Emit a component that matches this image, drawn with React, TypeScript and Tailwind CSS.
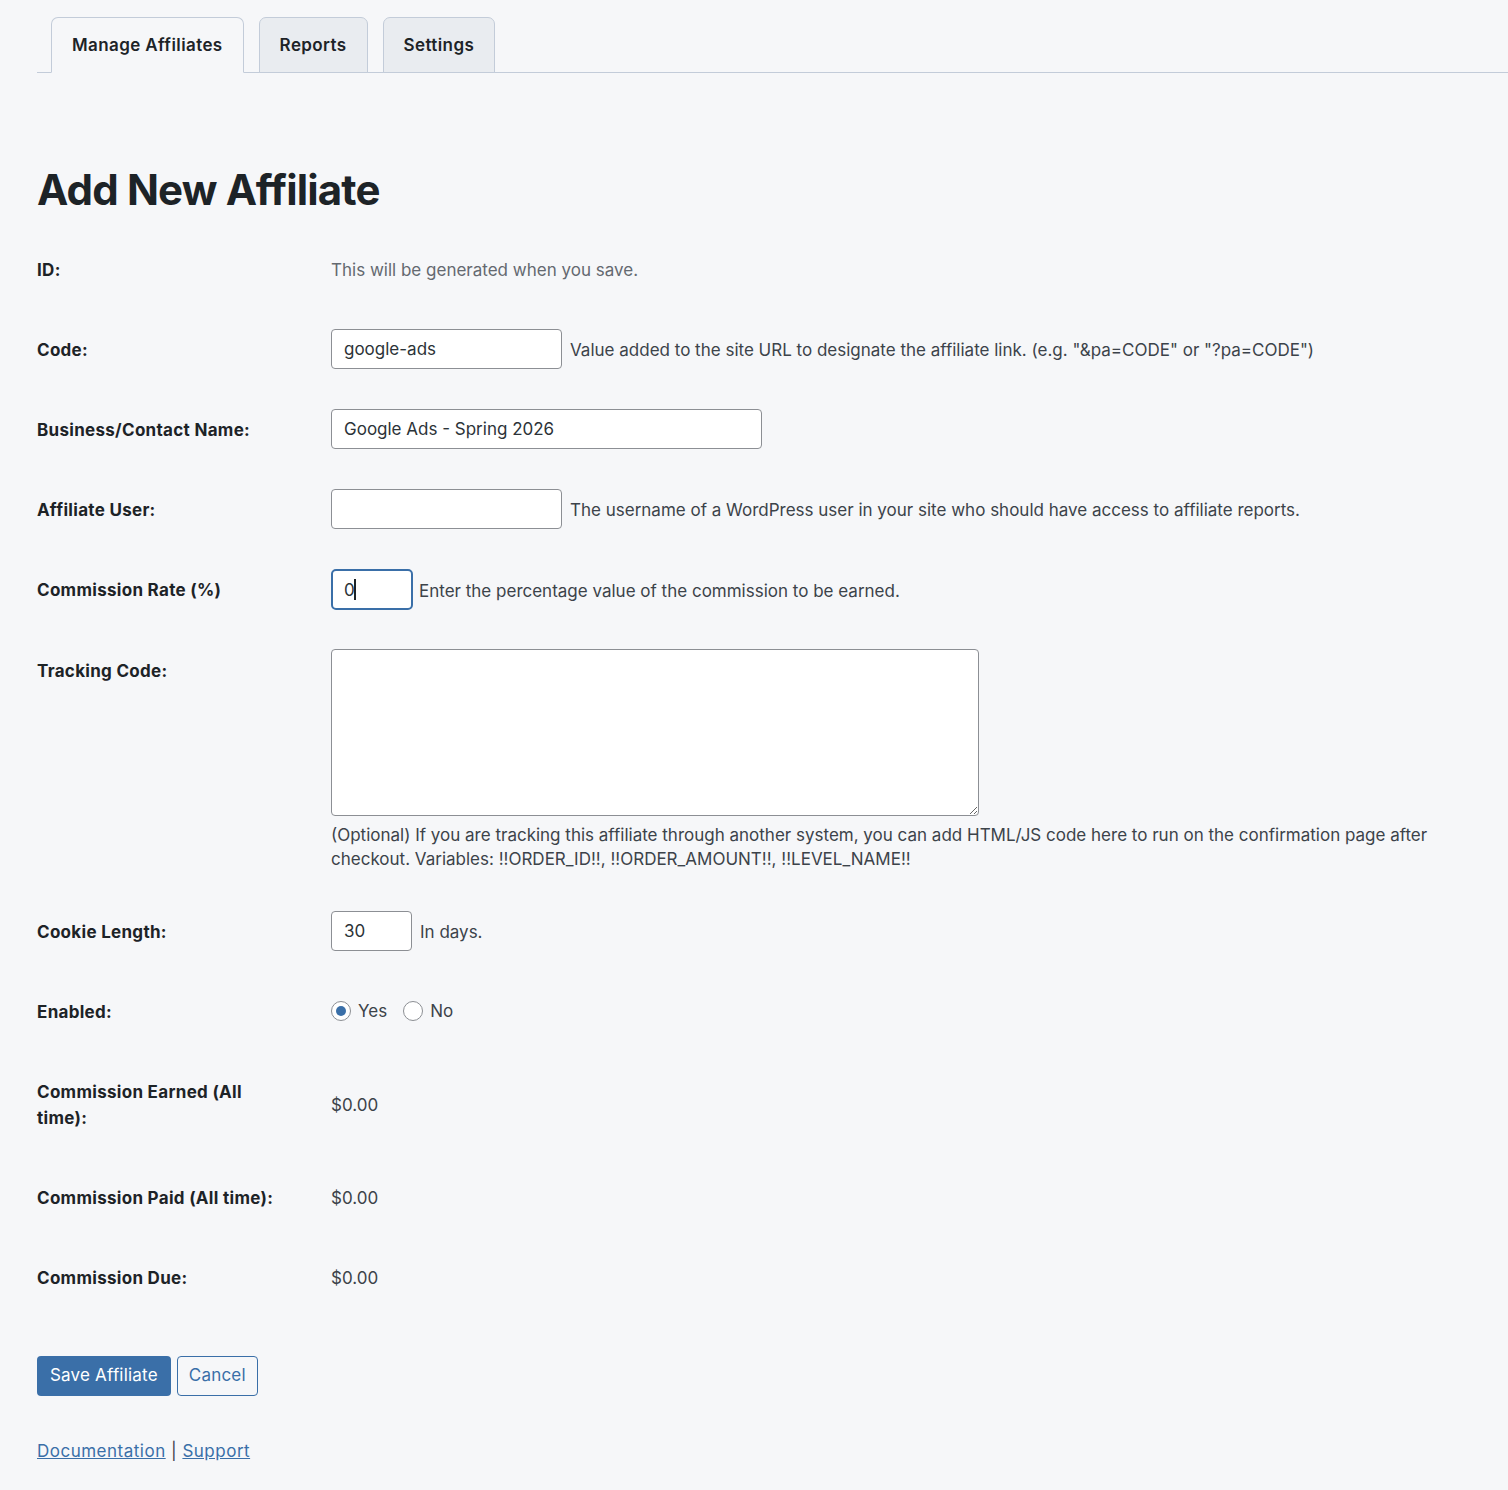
import type { ReactNode } from 'react';

const font = { fontFamily: 'Inter, "Noto Sans", "Liberation Sans", sans-serif' };

interface RowProps {
    label: ReactNode;
    children: ReactNode;
    top?: boolean;
}

function Row({ label, children, top = false }: RowProps) {
    return (
        <div className="flex">
            <div className="w-[294px] shrink-0 pt-[28px] pb-[26px] pr-[36px] text-[17px] font-bold leading-[26px] tracking-[0.3px] text-[#1d2327]">
                {label}
            </div>
            <div className={`flex min-h-[80px] flex-1 py-5 ${top ? 'flex-col items-start' : 'items-center'}`}>
                {children}
            </div>
        </div>
    );
}

function Radio({ checked, label }: { checked: boolean; label: string }) {
    return (
        <label className="flex items-center gap-[7px]">
            <span className="flex h-5 w-5 items-center justify-center rounded-full border border-[#8c8f94] bg-white">
                {checked && <span className="h-[10px] w-[10px] rounded-full bg-[#3a6fa8]" />}
            </span>
            <span className="pt-[2px] text-[17px] text-[#3c434a]">{label}</span>
        </label>
    );
}

const inputCls =
    'h-10 rounded-[4px] border border-[#8c8f94] bg-white px-3 text-[17px] text-[#2c3338] outline-none';

const descCls = 'pt-1 text-[17px] text-[#3c434a]';

export default function App() {
    const tabs = ['Manage Affiliates', 'Reports', 'Settings'];

    return (
        <div className="min-h-screen bg-[#f6f7f9] pb-8 text-[#1d2327]" style={font}>
            <div className="pl-[37px] pt-[17px]">
                <nav className="flex items-end gap-[15px] border-b border-[#c3ccd9] pl-[14px]">
                    {tabs.map((tab, i) => (
                        <button
                            key={tab}
                            className={`-mb-px flex h-[56px] items-center rounded-t-[7px] border border-[#c3ccd9] px-[20px] pt-[2px] text-[17px] font-semibold tracking-[0.4px] text-[#1d2327] ${
                                i === 0 ? 'border-b-[#f6f7f9] bg-[#f6f7f9]' : 'bg-[#e9ecf0]'
                            }`}
                        >
                            {tab}
                        </button>
                    ))}
                </nav>

                <h1 className="mt-[91px] mb-[13px] text-[42px] font-bold leading-[52px] tracking-[-0.02em] text-[#1d2327]">
                    Add New Affiliate
                </h1>

                <div className="pr-[60px]">
                    <Row label="ID:">
                        <span className="pt-[3px] text-[17px] text-[#646970]">This will be generated when you save.</span>
                    </Row>
                    <Row label="Code:">
                        <input className={`${inputCls} w-[231px]`} defaultValue="google-ads" />
                        <span className={`ml-2 ${descCls}`}>
                            Value added to the site URL to designate the affiliate link. (e.g. "&amp;pa=CODE" or "?pa=CODE")
                        </span>
                    </Row>
                    <Row label="Business/Contact Name:">
                        <input className={`${inputCls} w-[431px]`} defaultValue="Google Ads - Spring 2026" />
                    </Row>
                    <Row label="Affiliate User:">
                        <input className={`${inputCls} w-[231px]`} defaultValue="" />
                        <span className={`ml-2 ${descCls}`}>
                            The username of a WordPress user in your site who should have access to affiliate reports.
                        </span>
                    </Row>
                    <Row label="Commission Rate (%)">
                        <div className="relative">
                            <input
                                className="h-[41px] w-[82px] rounded-[5px] border-2 border-[#3a6fa8] bg-white px-[11px] text-[17px] text-[#2c3338] outline-none"
                                defaultValue="0"
                            />
                            <span className="absolute left-[23px] top-[10px] h-[21px] w-[1.5px] bg-[#1d2327]" />
                        </div>
                        <span className={`ml-[6px] ${descCls}`}>
                            Enter the percentage value of the commission to be earned.
                        </span>
                    </Row>
                    <Row label="Tracking Code:" top>
                        <textarea className="-mt-px h-[167px] w-[648px] rounded-[4px] border border-[#8c8f94] bg-white p-3 text-[17px] outline-none" />
                        <p className="mt-[7px] text-[17px] leading-[24px] text-[#3c434a]">
                            (Optional) If you are tracking this affiliate through another system, you can add HTML/JS code here to run on the confirmation page after checkout. Variables: !!ORDER_ID!!, !!ORDER_AMOUNT!!, !!LEVEL_NAME!!
                        </p>
                    </Row>
                    <Row label="Cookie Length:">
                        <input className={`${inputCls} w-[81px]`} defaultValue="30" />
                        <span className={`ml-2 ${descCls}`}>In days.</span>
                    </Row>
                    <Row label="Enabled:">
                        <div className="flex items-center gap-4">
                            <Radio checked label="Yes" />
                            <Radio checked={false} label="No" />
                        </div>
                    </Row>
                    <Row label="Commission Earned (All time):">
                        <span className={descCls}>$0.00</span>
                    </Row>
                    <Row label="Commission Paid (All time):">
                        <span className={descCls}>$0.00</span>
                    </Row>
                    <Row label="Commission Due:">
                        <span className={descCls}>$0.00</span>
                    </Row>
                </div>

                <div className="mt-[39px] flex gap-[6px]">
                    <button className="h-10 rounded-[4px] bg-[#3a6fa8] px-[13px] text-[17px] tracking-[0.2px] text-white">
                        Save Affiliate
                    </button>
                    <button className="h-10 rounded-[4px] border border-[#3a6fa8] bg-[#f6f7f9] px-[11px] text-[17px] tracking-[0.2px] text-[#3a6fa8]">
                        Cancel
                    </button>
                </div>

                <p className="mt-[43px] text-[17px] leading-[24px] tracking-[0.5px] text-[#3c434a]">
                    <a href="#" className="text-[#3a6fa8] underline">Documentation</a> |{' '}
                    <a href="#" className="text-[#3a6fa8] underline">Support</a>
                </p>
            </div>
        </div>
    );
}
